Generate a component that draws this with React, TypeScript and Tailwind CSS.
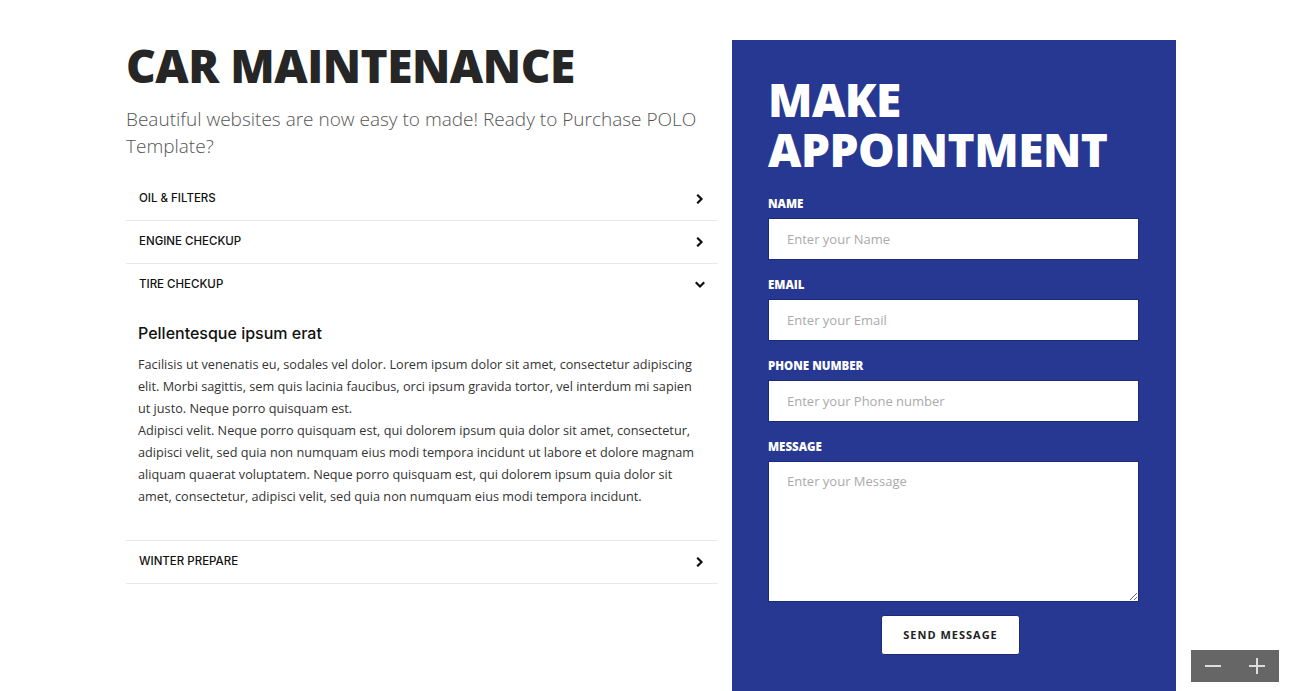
import { useState } from 'react';

const items = [
  { title: 'OIL & FILTERS' },
  { title: 'ENGINE CHECKUP' },
  { title: 'TIRE CHECKUP' },
  { title: 'WINTER PREPARE' },
];

function Chevron({ down }: { down?: boolean }) {
  return (
    <svg width="10" height="10" viewBox="0 0 10 10" className={down ? 'rotate-90' : ''}>
      <path d="M3 1.5 L6.5 5 L3 8.5" fill="none" stroke="#111" strokeWidth="2.2" strokeLinecap="square" />
    </svg>
  );
}

function Field({ label, placeholder }: { label: string; placeholder: string }) {
  return (
    <div className="flex flex-col">
      <label className="text-[11.5px] font-extrabold text-white leading-[14px] mb-[7px]">{label}</label>
      <input
        placeholder={placeholder}
        className="h-[42px] w-full bg-white px-[18px] text-[13px] text-[#333] placeholder:text-[#aaa] outline-none border border-[#1c2a78]"
      />
    </div>
  );
}

export default function App() {
  const [openIdx, setOpenIdx] = useState(2);

  return (
    <div className="relative h-[691px] w-[1290px] overflow-hidden bg-white font-['Open_Sans',sans-serif]">
      <div className="flex gap-[14px] pl-[126px] pt-[40px]">
        {/* left column */}
        <div className="w-[592px]">
          <h1 className="text-[46px] font-extrabold leading-[50px] text-[#262626] tracking-[-0.5px]">
            CAR MAINTENANCE
          </h1>
          <p className="mt-[16px] text-[19px] font-light leading-[27px] text-[#555]">
            Beautiful websites are now easy to made! Ready to Purchase POLO Template?
          </p>

          <div className="mt-[18px]">
            {items.map((it, i) => (
              <div key={it.title} className="border-b border-[#e8e8e8]">
                <button
                  onClick={() => setOpenIdx(openIdx === i ? -1 : i)}
                  className="flex h-[42px] w-full items-center justify-between pl-[13px] pr-[13px] text-left"
                >
                  <span className="font-['Inter',sans-serif] text-[11.5px] font-medium text-[#111]">{it.title}</span>
                  <Chevron down={openIdx === i} />
                </button>
                {openIdx === i && (
                  <div className="px-[12px] pt-[16px] pb-[33px]">
                    <h4 className="font-['Inter',sans-serif] text-[16px] font-medium text-[#111] leading-[22px]">
                      Pellentesque ipsum erat
                    </h4>
                    <p className="mt-[9px] text-[12.7px] leading-[22px] text-[#333]">
                      Facilisis ut venenatis eu, sodales vel dolor. Lorem ipsum dolor sit amet, consectetur adipiscing elit. Morbi sagittis, sem quis lacinia faucibus, orci ipsum gravida tortor, vel interdum mi sapien ut justo. Neque porro quisquam est.
                      <br />
                      Adipisci velit. Neque porro quisquam est, qui dolorem ipsum quia dolor sit amet, consectetur, adipisci velit, sed quia non numquam eius modi tempora incidunt ut labore et dolore magnam aliquam quaerat voluptatem. Neque porro quisquam est, qui dolorem ipsum quia dolor sit amet, consectetur, adipisci velit, sed quia non numquam eius modi tempora incidunt.
                    </p>
                  </div>
                )}
              </div>
            ))}
          </div>
        </div>

        {/* appointment panel */}
        <div className="w-[444px] min-h-[651px] bg-[#263892] pl-[36px] pr-[37px] pt-[34px]">
          <h2 className="text-[46px] font-extrabold leading-[50px] text-white tracking-[-0.5px]">
            MAKE
            <br />
            APPOINTMENT
          </h2>
          <div className="mt-[23px] flex flex-col gap-[18px]">
            <Field label="NAME" placeholder="Enter your Name" />
            <Field label="EMAIL" placeholder="Enter your Email" />
            <Field label="PHONE NUMBER" placeholder="Enter your Phone number" />
            <div className="flex flex-col">
              <label className="text-[11.5px] font-extrabold text-white leading-[14px] mb-[7px]">MESSAGE</label>
              <textarea
                placeholder="Enter your Message"
                className="h-[141px] w-full bg-white px-[18px] py-[10px] text-[13px] text-[#333] placeholder:text-[#aaa] outline-none border border-[#1c2a78]"
              />
            </div>
          </div>
          <div className="mt-[13px] flex">
            <button className="ml-[113px] h-[40px] w-[139px] rounded-[3px] bg-white text-[11px] font-bold tracking-[1px] text-[#222] border border-[#1c2a78]">
              SEND MESSAGE
            </button>
          </div>
        </div>
      </div>

      {/* zoom control */}
      <div className="absolute left-[1191px] top-[650px] flex h-[32px] w-[88px] items-center justify-around bg-[#666]">
        <svg width="18" height="18" viewBox="0 0 18 18">
          <path d="M1 9 H17" stroke="#ddd" strokeWidth="2" />
        </svg>
        <svg width="18" height="18" viewBox="0 0 18 18">
          <path d="M1 9 H17 M9 1 V17" stroke="#ddd" strokeWidth="2" />
        </svg>
      </div>
    </div>
  );
}
